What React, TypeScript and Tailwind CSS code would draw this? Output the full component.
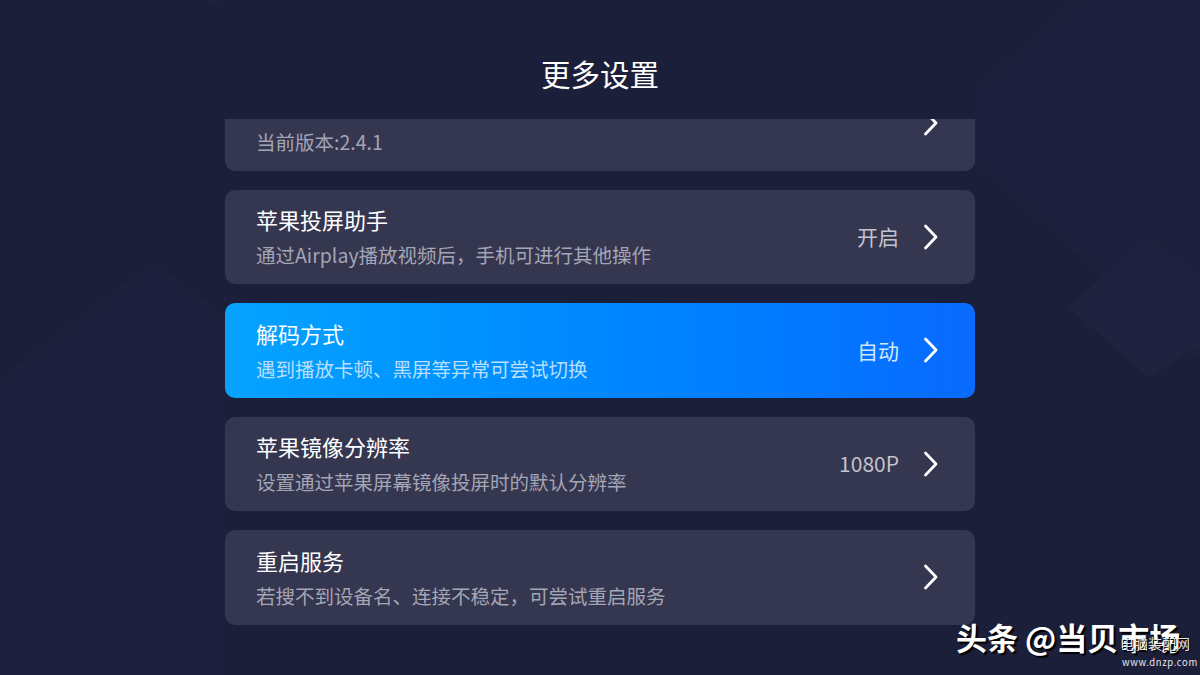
interface SettingItem {
  title: string;
  desc: string;
  value?: string;
  active?: boolean;
}

const ITEMS: SettingItem[] = [
  { title: '版本信息', desc: '当前版本:2.4.1' },
  { title: '苹果投屏助手', desc: '通过Airplay播放视频后，手机可进行其他操作', value: '开启' },
  { title: '解码方式', desc: '遇到播放卡顿、黑屏等异常可尝试切换', value: '自动', active: true },
  { title: '苹果镜像分辨率', desc: '设置通过苹果屏幕镜像投屏时的默认分辨率', value: '1080P' },
  { title: '重启服务', desc: '若搜不到设备名、连接不稳定，可尝试重启服务' },
];

function Chevron() {
  return (
    <svg width="16" height="26" viewBox="0 0 16 26" fill="none" className="shrink-0">
      <polyline points="2.5,2 13,13 2.5,24" stroke="white" strokeWidth="2.8" strokeLinecap="round" strokeLinejoin="round" />
    </svg>
  );
}

function Row({ item }: { item: SettingItem }) {
  return (
    <div
      className={`h-[94.5px] rounded-[10px] flex items-center pl-[31px] pr-[36px] ${
        item.active ? 'bg-gradient-to-r from-[#08a3ff] to-[#0a6aff]' : 'bg-[#35364f]'
      }`}
    >
      <div className="flex-1 flex flex-col gap-[11px]">
        <div className="text-[22px] leading-[26px] text-white">{item.title}</div>
        <div className={`text-[19.5px] leading-[24px] ${item.active ? 'text-[#b7dfff]' : 'text-[#a4a5b5]'}`}>
          {item.desc}
        </div>
      </div>
      {item.value && (
        <span className={`text-[21px] mr-[24px] ${item.active ? 'text-[#d0e8ff]' : 'text-[#c2c3cd]'}`}>{item.value}</span>
      )}
      <Chevron />
    </div>
  );
}

function Backdrop() {
  return (
    <svg className="absolute inset-0" width="1200" height="675" viewBox="0 0 1200 675">
      <polygon points="1075,0 1200,0 1200,360 975,165 975,88" fill="#1e213d" />
      <polygon points="1150,238 1200,280 1200,345 1150,378 1068,307" fill="#20233f" />
      <polygon points="153,262 225,315 225,675 0,675 0,378" fill="#1e213d" />
      <polygon points="205,0 225,0 225,12" fill="#1e213d" />
    </svg>
  );
}

export default function App() {
  return (
    <div
      className="relative w-[1200px] h-[675px] overflow-hidden bg-[#1c1f39] text-white"
      style={{ fontFamily: '"Noto Sans CJK SC", "Noto Sans", sans-serif' }}
    >
      <Backdrop />

      <div className="relative flex flex-col items-center">
        <h1 className="mt-[52px] h-[48px] text-[29.5px] leading-[42px]">更多设置</h1>
        <div className="mt-[19px] w-[750px] h-[556px] overflow-hidden">
          <div className="-mt-[43px] flex flex-col gap-[19px]">
            {ITEMS.map((it) => (
              <Row key={it.title} item={it} />
            ))}
          </div>
        </div>
      </div>

      {/* watermark */}
      <div className="absolute left-[956px] top-[616px] text-[31px] leading-[42px] font-bold text-white [text-shadow:2px_2px_1px_#000]">
        头条 @当贝市场
      </div>
      <div className="absolute left-[1120px] top-[635px] text-[14px] leading-[16px] text-[#e6e6ee] [text-shadow:1px_1px_0_#000]">
        电脑装配网
      </div>
      <div className="absolute left-[1122px] top-[656px] text-[9.5px] leading-[12px] tracking-[0.6px] text-[#e6e6ee]">
        www.dnzp.com
      </div>
    </div>
  );
}
